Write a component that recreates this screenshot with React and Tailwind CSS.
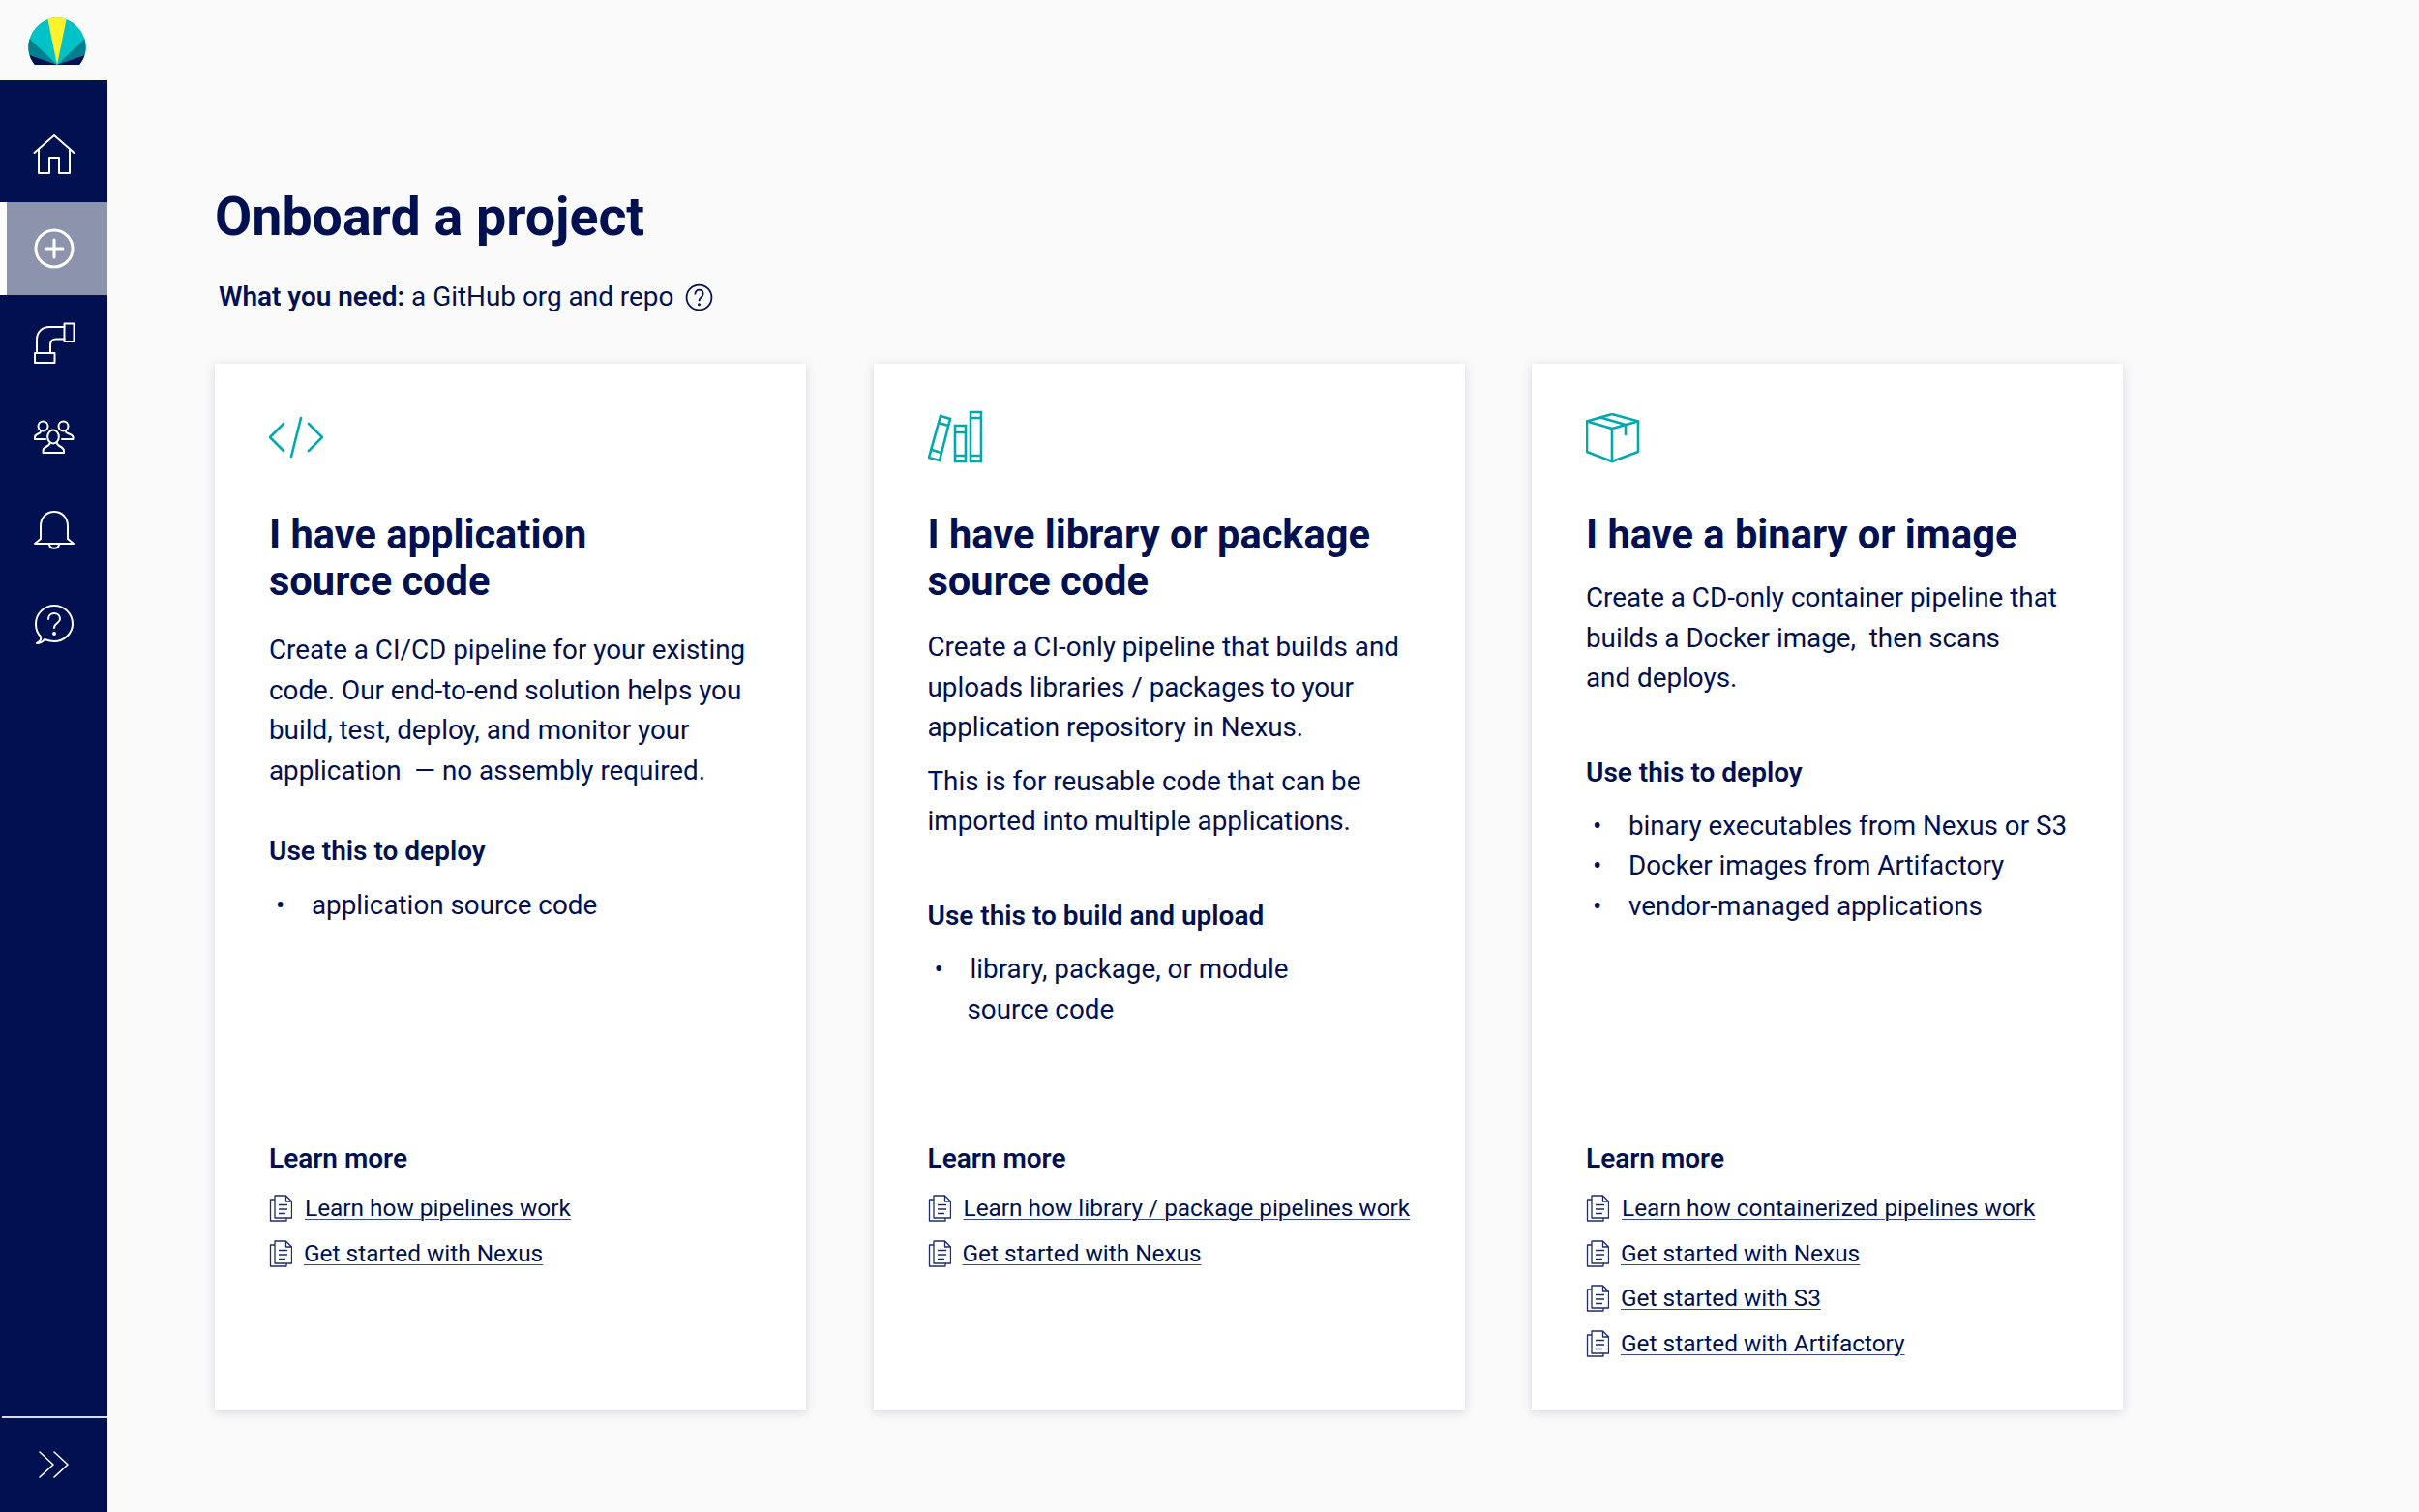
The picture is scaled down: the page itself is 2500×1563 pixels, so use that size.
const Ic = ({ children, className, vb = "0 0 44 44", sw = 2 }) => (
  <svg viewBox={vb} className={className} fill="none" stroke="currentColor" strokeWidth={sw} strokeLinecap="round" strokeLinejoin="round">{children}</svg>
);

const Logo = () => (
  <svg viewBox="0 0 60 50" className="w-[60px] h-[50px] block">
    <defs><clipPath id="lc"><path d="M7 50 C-3 38 -1 22 8 12 C14 5 22 1 30 1 C38 1 46 5 52 12 C61 22 63 38 53 50 Z" /></clipPath></defs>
    <g clipPath="url(#lc)">
      <rect x="-2" y="0" width="64" height="50" fill="#00c2c7" />
      <path d="M30 50 L-4 18 L-4 52 Z" fill="#00808f" />
      <path d="M30 50 L64 18 L64 52 Z" fill="#00808f" />
      <path d="M30 50 L-4 38 L2 52 L58 52 L64 38 Z" fill="#001050" />
      <path d="M20 1 L40 1 L30 50 Z" fill="#fff22d" />
    </g>
  </svg>
);

const HomeI = () => (
  <Ic className="w-[44px] h-[44px]"><path d="M1.5 20 L22 2 L42.5 20" /><path d="M6 17 V41 H17 V25 H27 V41 H38 V17" /></Ic>
);
const PlusI = () => (
  <Ic className="w-[44px] h-[44px]" sw={3}><circle cx="22" cy="22" r="19" /><path d="M22 13 V31 M13 22 H31" /></Ic>
);
const PipeI = () => (
  <Ic className="w-[44px] h-[44px]"><rect x="2" y="33" width="20.5" height="10" /><path d="M4 33 V19 C4 11 10 6 17 6 H32.5" /><path d="M18 33 V25 C18 21 20 18.5 24 18.5 H32.5" /><rect x="32.5" y="2.5" width="10" height="18.5" /></Ic>
);
const PeopleI = () => (
  <Ic className="w-[44px] h-[44px]" vb="0 0 44 36">
    <circle cx="10.5" cy="7.5" r="5" /><circle cx="31.5" cy="7.5" r="5" />
    <path d="M8 13 C8 16 2 15 2 19 V21 H13" /><path d="M34 13 C34 16 41.5 15 41.5 19 V21 H30" />
    <ellipse cx="21" cy="18.5" rx="5.8" ry="7" />
    <path d="M17.5 25 C17.5 29 10.5 28 10.5 33 V35 H32 V33 C32 28 25 29 25 25" />
  </Ic>
);
const BellI = () => (
  <Ic className="w-[44px] h-[44px]"><path d="M2 36 L8 31 V18 C8 9 14 3 22 3 C30 3 36 9 36 18 V31 L42 36 Z" /><path d="M17 37 C18 42 26 42 27 37" /></Ic>
);
const HelpI = () => (
  <Ic className="w-[44px] h-[44px]"><path d="M4 42 C8 40 9 38 8 35 C4 31 3 27 3 22 C3 11 12 3 22 3 C32 3 41 11 41 22 C41 32 32 40 22 40 C18 40 15 39 12 38 C10 41 7 42 4 42 Z" /><path d="M16 17 C16 13 19 11 22 11 C25 11 28 13 28 17 C28 21 22 21 22 26" /><circle cx="22" cy="32" r="1" fill="currentColor" /></Ic>
);

const NavItem = ({ children, h, active }) => (
  <div className={`flex items-center justify-center ${h} ${active ? "bg-[#8c93ad] border-l-[7px] border-white pr-[7px]" : ""} text-white`}>{children}</div>
);

const Sidebar = () => (
  <aside className="w-[111px] shrink-0 flex flex-col">
    <div className="h-[83px] pl-[29px] pt-[17px] shrink-0"><Logo /></div>
    <div className="flex-1 bg-[#001050] flex flex-col">
      <div className="flex items-center justify-center h-[126px] text-white pt-[28px]"><HomeI /></div>
      <NavItem h="h-[96px]" active><PlusI /></NavItem>
      <NavItem h="h-[97px]"><PipeI /></NavItem>
      <NavItem h="h-[97px]"><PeopleI /></NavItem>
      <NavItem h="h-[97px]"><BellI /></NavItem>
      <NavItem h="h-[97px]"><HelpI /></NavItem>
      <div className="flex-1" />
      <div className="ml-[2px] h-[2px] bg-[#d9dbe5]" />
      <div className="h-[97px] flex items-center justify-center text-white pb-[1px]">
        <Ic className="w-[34px] h-[30px]" vb="0 0 34 30" sw={1.6}><path d="M2 2 L16 15 L2 28 M17 2 L31 15 L17 28" /></Ic>
      </div>
    </div>
  </aside>
);

const DocI = () => (
  <svg viewBox="0 0 24 28" className="w-[24px] h-[28px] shrink-0" fill="none" stroke="#1f2c68" strokeWidth="1.3" strokeLinejoin="round">
    <path d="M6 5 H1.5 V27 H18 V24" /><path d="M6 1 V24 H23.5 V7 L17.5 1 Z M17.5 1 V7 H23.5" /><path d="M10 10.5 H19 M10 15 H19 M10 19.5 H17" />
  </svg>
);

const Link = ({ children, gap = "gap-[13px]" }) => (
  <div className={`flex items-center h-[28px] whitespace-nowrap ${gap}`}>
    <DocI />
    <span className="text-[24.4px] leading-[28px] underline underline-offset-[3px] decoration-[1px] decoration-[#3b4a85]">{children}</span>
  </div>
);

const H2 = ({ children, className = "" }) => (
  <h2 className={`text-[41.6px] leading-[48px] font-bold ${className}`}>{children}</h2>
);
const H3 = ({ children, className = "" }) => (
  <h3 className={`text-[28px] leading-[34px] font-semibold ${className}`}>{children}</h3>
);
const Bullet = ({ children }) => (
  <li className="flex whitespace-nowrap"><span className="w-[44px] pl-[7px] shrink-0">•</span><span>{children}</span></li>
);

const Card = ({ icon, top, links }) => (
  <section className="w-[611px] h-[1082px] bg-white shadow-[0_2px_10px_rgba(0,15,80,0.14)] px-[56px] text-[27.8px] leading-[41.6px] flex flex-col">
    <div className="h-[153px] pt-[54px] shrink-0">{icon}</div>
    <div className="h-[652px] shrink-0">{top}</div>
    <H3 className="shrink-0 mb-[20px]">Learn more</H3>
    <div className="flex flex-col gap-[18.5px]">{links}</div>
  </section>
);

const CodeIcon = () => (
  <svg viewBox="0 0 56 44" className="w-[56px] h-[44px]" fill="none" stroke="#00a9ad" strokeWidth="2.6" strokeLinecap="round" strokeLinejoin="round">
    <path d="M15 8 L1 22 L15 36 M41 8 L55 22 L41 36 M33 2 L23 42" />
  </svg>
);
const BooksIcon = () => (
  <svg viewBox="0 0 56 56" className="w-[56px] h-[56px] -mt-[6px]" fill="none" stroke="#00a9ad" strokeWidth="2.6">
    <path d="M13 6 L23 9 L12 52 L1 49 Z M11 13 L21 16 M4 41 L14 44" />
    <path d="M28 16 H39 V53 H28 Z M28 23 H39 M28 47 H39" />
    <path d="M44 2 H55 V53 H44 Z M44 8 H55 M44 47 H55" />
  </svg>
);
const BoxIcon = () => (
  <svg viewBox="0 0 56 52" className="w-[56px] h-[52px] -mt-[3px]" fill="none" stroke="#00a9ad" strokeWidth="2.6" strokeLinejoin="round" strokeLinecap="round">
    <path d="M1 8.5 L27 1 L54 8.5 V40 L27 50 L1 40 Z" /><path d="M1 8.5 L27 16 L54 8.5 M27 16 V50" /><path d="M15 4.5 L41 12 V22" />
  </svg>
);

export default function App() {
  return (
    <div className="min-h-[1563px] h-[1563px] flex bg-[#fafafa] text-[#001050] font-['Roboto',sans-serif] overflow-hidden">
      <Sidebar />
      <main className="flex-1 pl-[111px] pt-[190px]">
        <h1 className="text-[55.5px] leading-[70px] font-bold">Onboard a project</h1>
        <p className="ml-[4px] mt-[30px] text-[27.9px] leading-[34px] flex items-center">
          <span><b className="font-semibold">What you need:</b> a GitHub org and repo</span>
          <svg viewBox="0 0 28 28" className="w-[29px] h-[29px] ml-[12px]" fill="none" stroke="currentColor" strokeWidth="1.7"><circle cx="14" cy="14" r="12.5" /><path d="M10 11 C10 8 12 6.5 14 6.5 C16.5 6.5 18 8 18 10.5 C18 13.5 14 14 14 17.5" /><circle cx="14" cy="21" r="0.6" fill="currentColor" /></svg>
        </p>
        <div className="flex gap-[69.5px] mt-[52px]">
          <Card
            icon={<CodeIcon />}
            top={<>
              <H2 className="mb-[26px]">I have application<br />source code</H2>
              <p>Create a CI/CD pipeline for your existing<br />code. Our end-to-end solution helps you<br />build, test, deploy, and monitor your<br />application &nbsp;— no assembly required.</p>
              <H3 className="mt-[46px] mb-[18px]">Use this to deploy</H3>
              <ul><Bullet>application source code</Bullet></ul>
            </>}
            links={<><Link>Learn how pipelines work</Link><Link gap="gap-[12px]">Get started with Nexus</Link></>}
          />
          <Card
            icon={<BooksIcon />}
            top={<>
              <H2 className="mb-[23px]">I have library or package<br />source code</H2>
              <p>Create a CI-only pipeline that builds and<br />uploads libraries / packages to your<br />application repository in Nexus.</p>
              <p className="mt-[14px]">This is for reusable code that can be<br />imported into multiple applications.</p>
              <H3 className="mt-[60px] mb-[17px]">Use this to build and upload</H3>
              <ul><Bullet>library, package, or module<br /><span className="-ml-[3px]">source code</span></Bullet></ul>
            </>}
            links={<><Link>Learn how library / package pipelines work</Link><Link gap="gap-[12px]">Get started with Nexus</Link></>}
          />
          <Card
            icon={<BoxIcon />}
            top={<>
              <H2 className="mb-[20px]">I have a binary or image</H2>
              <p>Create a CD-only container pipeline that<br />builds a Docker image, &nbsp;then scans<br />and deploys.</p>
              <H3 className="mt-[60px] mb-[17px]">Use this to deploy</H3>
              <ul>
                <Bullet>binary executables from Nexus or S3</Bullet>
                <Bullet>Docker images from Artifactory</Bullet>
                <Bullet>vendor-managed applications</Bullet>
              </ul>
            </>}
            links={<><Link>Learn how containerized pipelines work</Link><Link gap="gap-[12px]">Get started with Nexus</Link><Link gap="gap-[12px]">Get started with S3</Link><Link gap="gap-[12px]">Get started with Artifactory</Link></>}
          />
        </div>
      </main>
    </div>
  );
}
